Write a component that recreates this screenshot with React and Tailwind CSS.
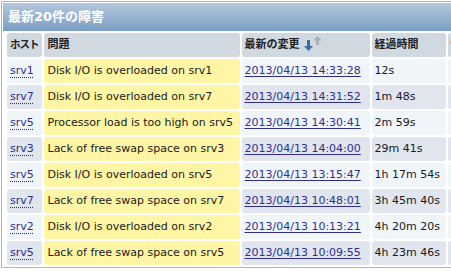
const rows = [
  { host: 'srv1', problem: 'Disk I/O is overloaded on srv1', time: '2013/04/13 14:33:28', age: '12s' },
  { host: 'srv7', problem: 'Disk I/O is overloaded on srv7', time: '2013/04/13 14:31:52', age: '1m 48s' },
  { host: 'srv5', problem: 'Processor load is too high on srv5', time: '2013/04/13 14:30:41', age: '2m 59s' },
  { host: 'srv3', problem: 'Lack of free swap space on srv3', time: '2013/04/13 14:04:00', age: '29m 41s' },
  { host: 'srv5', problem: 'Disk I/O is overloaded on srv5', time: '2013/04/13 13:15:47', age: '1h 17m 54s' },
  { host: 'srv7', problem: 'Lack of free swap space on srv7', time: '2013/04/13 10:48:01', age: '3h 45m 40s' },
  { host: 'srv2', problem: 'Disk I/O is overloaded on srv2', time: '2013/04/13 10:13:21', age: '4h 20m 20s' },
  { host: 'srv5', problem: 'Lack of free swap space on srv5', time: '2013/04/13 10:09:55', age: '4h 23m 46s' },
];

// sort arrows next to the column header (blue = active desc, gray = asc)
function SortIcon() {
  return (
    <svg width="18" height="16" viewBox="0 0 18 16" className="inline-block ml-[4px] align-middle -mt-[2px]">
      <path d="M9 4.5 L13.5 0 L18 4.5 L15 4.5 L15 9 L12 9 L12 4.5 Z" fill="#a9b1b9" />
      <path d="M3 4 L6 4 L6 10 L9 10 L4.5 15 L0 10 L3 10 Z" fill="#3c6aab" />
    </svg>
  );
}

export default function App() {
  return (
    <div className="w-[451px] h-[271px] overflow-hidden bg-white pt-[1px] pl-[1px]" style={{ fontFamily: '"DejaVu Sans", "Noto Sans CJK JP", sans-serif' }}>
      <div className="w-[520px] border border-[#a7b6c9] border-r-0 rounded-tl-[2px] p-[1px] pb-0">
        <div className="h-[28px] bg-gradient-to-b from-[#b4c8de] to-[#7a9dc3] flex items-center pl-[5px] text-white font-bold text-[13px]">
          最新20件の障害
        </div>
        <table className="border-separate border-spacing-[2px] ml-[2px] text-[11px] text-[#1a1a1a]">
          <thead>
            <tr className="h-[24px]">
              {['ホスト', '問題', '最新の変更', '経過時間', '情報'].map((h, i) => (
                <th key={i} className={`bg-[#d0d8e0] rounded-[3px] text-left font-bold px-[3px] whitespace-nowrap text-[#1e1e1e] ${i === 0 ? 'w-[34px] text-[10.5px] tracking-[-1px]' : i === 1 ? 'w-[196px] px-[4px]' : i === 2 ? 'w-[128px]' : i === 3 ? 'w-[74px]' : 'w-[60px]'}`}>
                  {h}
                  {i === 2 && <SortIcon />}
                </th>
              ))}
            </tr>
          </thead>
          <tbody>
            {rows.map((r, i) => {
              const bg = i % 2 === 0 ? 'bg-[#f0f5fa]' : 'bg-[#e0e5ee]';
              return (
                <tr key={i} className="h-[24px]">
                  <td className={`${bg} rounded-[3px] px-[3px]`}>
                    <span className="text-[#302f8c] underline decoration-dotted decoration-[#302f8c] underline-offset-[3px]">{r.host}</span>
                  </td>
                  <td className="bg-[#fff6a5] rounded-[3px] px-[4px] whitespace-nowrap">{r.problem}</td>
                  <td className={`${bg} rounded-[3px] px-[3px] whitespace-nowrap`}>
                    <span className="text-[#302f8c] underline underline-offset-[2px]">{r.time}</span>
                  </td>
                  <td className={`${bg} rounded-[3px] px-[3px] whitespace-nowrap`}>{r.age}</td>
                  <td className={`${bg} rounded-[3px]`}></td>
                </tr>
              );
            })}
          </tbody>
        </table>
      </div>
    </div>
  );
}
